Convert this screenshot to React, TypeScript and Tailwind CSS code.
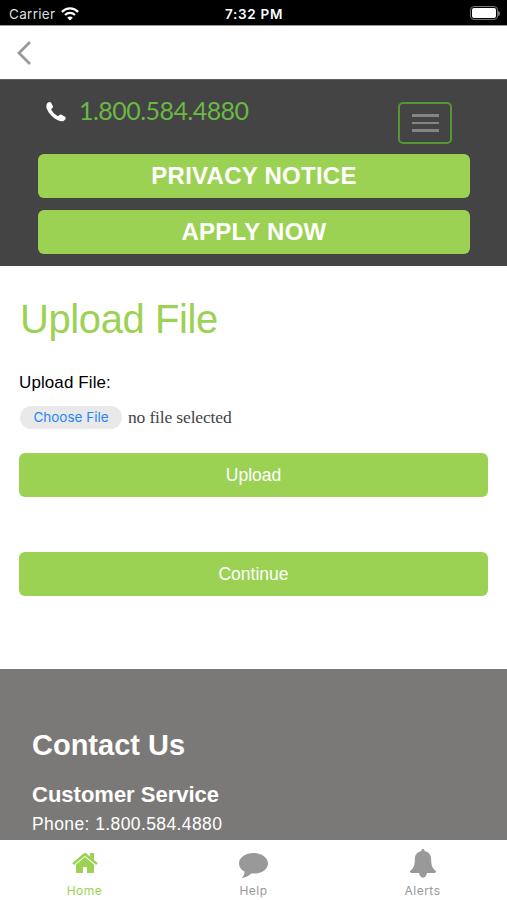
import React from 'react';

function StatusBar() {
  return (
    <div className="h-[25px] shrink-0 bg-black text-white grid grid-cols-3 items-center px-[9px] font-['Inter',sans-serif]">
      <div className="flex items-center gap-[6px] pt-[2px]">
        <span className="text-[13.500px] leading-4 tracking-[0.3px] text-[#dedede]">Carrier</span>
        <svg className="w-[18px] h-[14px]" viewBox="0 0 18 14" fill="none" stroke="white">
          <path d="M.9 4.9C5.5.3 12.5.3 17.1 4.9" strokeWidth="2.3" />
          <path d="M4 8c2.9-2.8 7.1-2.8 10 0" strokeWidth="2.2" />
          <path d="M9 13.6 6.2 10.7c1.6-1.5 4-1.5 5.6 0z" fill="white" stroke="none" />
        </svg>
      </div>
      <span className="pt-[2px] pl-[1px] text-center text-[13.500px] leading-4 font-semibold tracking-[0.700px]">7:32 PM</span>
      <div className="flex items-center justify-end -mr-[2px] pt-[1px]">
        <div className="w-[28px] h-[14px] rounded-[4px] border border-[#777] p-[1px]">
          <div className="w-full h-full rounded-[2px] bg-white" />
        </div>
        <div className="w-[2px] h-[5px] rounded-r-full bg-[#777]" />
      </div>
    </div>
  );
}

function SiteHeader() {
  return (
    <header className="h-[187px] shrink-0 bg-[#444] border-t border-[#606060] px-[38px] pr-[37px]">
      <div className="flex justify-between h-[74px]">
        <div className="flex pt-[15px] pl-[8px]">
          <svg className="w-[20px] h-[20px] mt-[7px]" viewBox="0 0 20 20" fill="white">
            <path d="M2 .6C3.3-.3 4.5 0 5.2 1l1.6 3.1c.4 1-.1 1.800-1.200 2.700-.5.5-.4 1 .1 1.800 1.400 2.200 3.100 3.800 5.400 5.200.8.5 1.300.4 1.800-.2.8-1 1.700-1.400 2.600-.9l3.200 1.800c1.100.7 1.300 1.700.5 2.900-1.500 2-4.100 2.400-6.700 1.200C7.200 16.300 3 12.100.8 6.800.0 4.400.200 2.100 2 .6z" />
          </svg>
          <span className="ml-[13px] text-[25px] leading-[31px] tracking-[-0.55px] text-[#69b944] font-['Lato',sans-serif]">1.800.584.4880</span>
        </div>
        <button className="mt-[22px] mr-[18px] w-[54px] h-[42px] rounded-[5px] border-2 border-[#579638] flex flex-col items-center justify-center gap-[5px]">
          <span className="w-[27px] h-[2.5px] bg-[#858585]" />
          <span className="w-[27px] h-[2.5px] bg-[#858585]" />
          <span className="w-[27px] h-[2.5px] bg-[#858585]" />
        </button>
      </div>
      <div className="flex flex-col gap-3 text-[24px] tracking-[0.25px] font-bold text-white">
        <button className="h-[44px] rounded-[6px] bg-[#9cd254]">PRIVACY NOTICE</button>
        <button className="h-[44px] rounded-[6px] bg-[#9cd254]">APPLY NOW</button>
      </div>
    </header>
  );
}

function UploadForm() {
  return (
    <main className="h-[403px] shrink-0 px-[19px]">
      <h1 className="pt-[29px] pl-[1px] text-[40px] leading-[48px] tracking-[-0.4px] text-[#9cd254]">Upload File</h1>
      <p className="mt-[28px] text-[17px] leading-6 tracking-[0.1px] text-black">Upload File:</p>
      <div className="mt-[11px] ml-[1px] flex items-center gap-[6px]">
        <button className="w-[102px] h-[23px] rounded-full bg-[#e9e9ea] text-[13.500px] leading-none text-[#2685f5] font-['Inter',sans-serif]">
          Choose File
        </button>
        <span className="text-[17.500px] leading-[23px] tracking-[-0.15px] text-[#444] font-['Liberation_Serif',serif]">no file selected</span>
      </div>
      <button className="mt-[24px] w-full h-[44px] rounded-[6px] bg-[#9cd254] text-[17.500px] text-white">Upload</button>
      <button className="mt-[55px] w-full h-[44px] rounded-[6px] bg-[#9cd254] text-[17.500px] text-white">Continue</button>
    </main>
  );
}

function Contact() {
  return (
    <section className="h-[171px] shrink-0 bg-[#7b7977] pl-8 text-white overflow-hidden">
      <h2 className="pt-[58px] text-[29px] leading-[36px] font-bold">Contact Us</h2>
      <h3 className="mt-[18px] text-[22px] leading-7 font-bold">Customer Service</h3>
      <p className="mt-[3px] text-[17.500px] leading-6 tracking-[0.4px]">Phone: 1.800.584.4880</p>
    </section>
  );
}

function TabBar() {
  return (
    <nav className="h-[60px] shrink-0 bg-white grid grid-cols-3 text-[#999] text-[12px] leading-4 tracking-[0.5px] font-['Inter',sans-serif]">
      <div className="flex flex-col items-center text-[#9cd254]">
        <svg className="w-[28px] h-[28px] mt-[9px]" viewBox="0 0 1792 1792" fill="currentColor">
          <path d="M1472 992v480q0 26-19 45t-45 19h-384v-384h-256v384h-384q-26 0-45-19t-19-45v-480q0-1 .5-3t.5-3l575-474 575 474q1 2 1 6zm223-69l-62 74q-8 9-21 11h-3q-13 0-21-7l-692-577-692 577q-12 8-24 7-13-2-21-11l-62-74q-8-10-7-23.5t11-21.5l719-599q32-26 76-26t76 26l244 204v-195q0-14 9-23t23-9h192q14 0 23 9t9 23v408l219 182q10 8 11 21.5t-7 23.5z" />
        </svg>
        <span className="mt-[6px]">Home</span>
      </div>
      <div className="flex flex-col items-center">
        <svg className="w-[29px] h-[25px] mt-[13px]" viewBox="0 0 29 25" fill="currentColor">
          <path d="M14.500 0C22.500 0 29 4.600 29 10.400s-6.500 10.200-14.500 10.200l-2.300-.1C9.800 22.900 6.500 24.500 2.600 24.900c1.600-1.500 3-3.400 3-6.100C2.200 17 0 13.900 0 10.400 0 4.600 6.500 0 14.500 0z" />
        </svg>
        <span className="mt-[5px]">Help</span>
      </div>
      <div className="flex flex-col items-center">
        <svg className="w-[26px] h-[29px] mt-[9px]" viewBox="0 0 26 29" fill="currentColor">
          <path d="M13 0c1 0 1.600.8 1.500 1.900 4.300.8 6.500 3.700 6.600 8.100.1 6 1.200 9.200 4.200 11.400.7.500.9 1 .6 1.700-.2.600-.7.900-1.400.9h-7.700c0 2.600-1.600 4.700-3.800 4.700S9.200 26.600 9.200 24H1.500c-.7 0-1.200-.3-1.400-.9-.3-.7-.1-1.200.6-1.700C3.700 19.200 4.800 16 4.900 10c.1-4.400 2.300-7.300 6.600-8.100C11.400.8 12 0 13 0z" />
        </svg>
        <span className="mt-[5px]">Alerts</span>
      </div>
    </nav>
  );
}

export default function App() {
  return (
    <div className="w-full h-[900px] flex flex-col overflow-hidden bg-white font-['Liberation_Sans',Arial,sans-serif]">
      <StatusBar />
      <div className="h-[54px] shrink-0 flex items-center border-t border-[#999] pl-[16px]">
        <svg className="w-[16px] h-[24px]" viewBox="0 0 16 24" fill="none" stroke="#999" strokeWidth="2.8">
          <path d="M14 1 3 12l11 11" />
        </svg>
      </div>
      <SiteHeader />
      <UploadForm />
      <Contact />
      <TabBar />
    </div>
  );
}
